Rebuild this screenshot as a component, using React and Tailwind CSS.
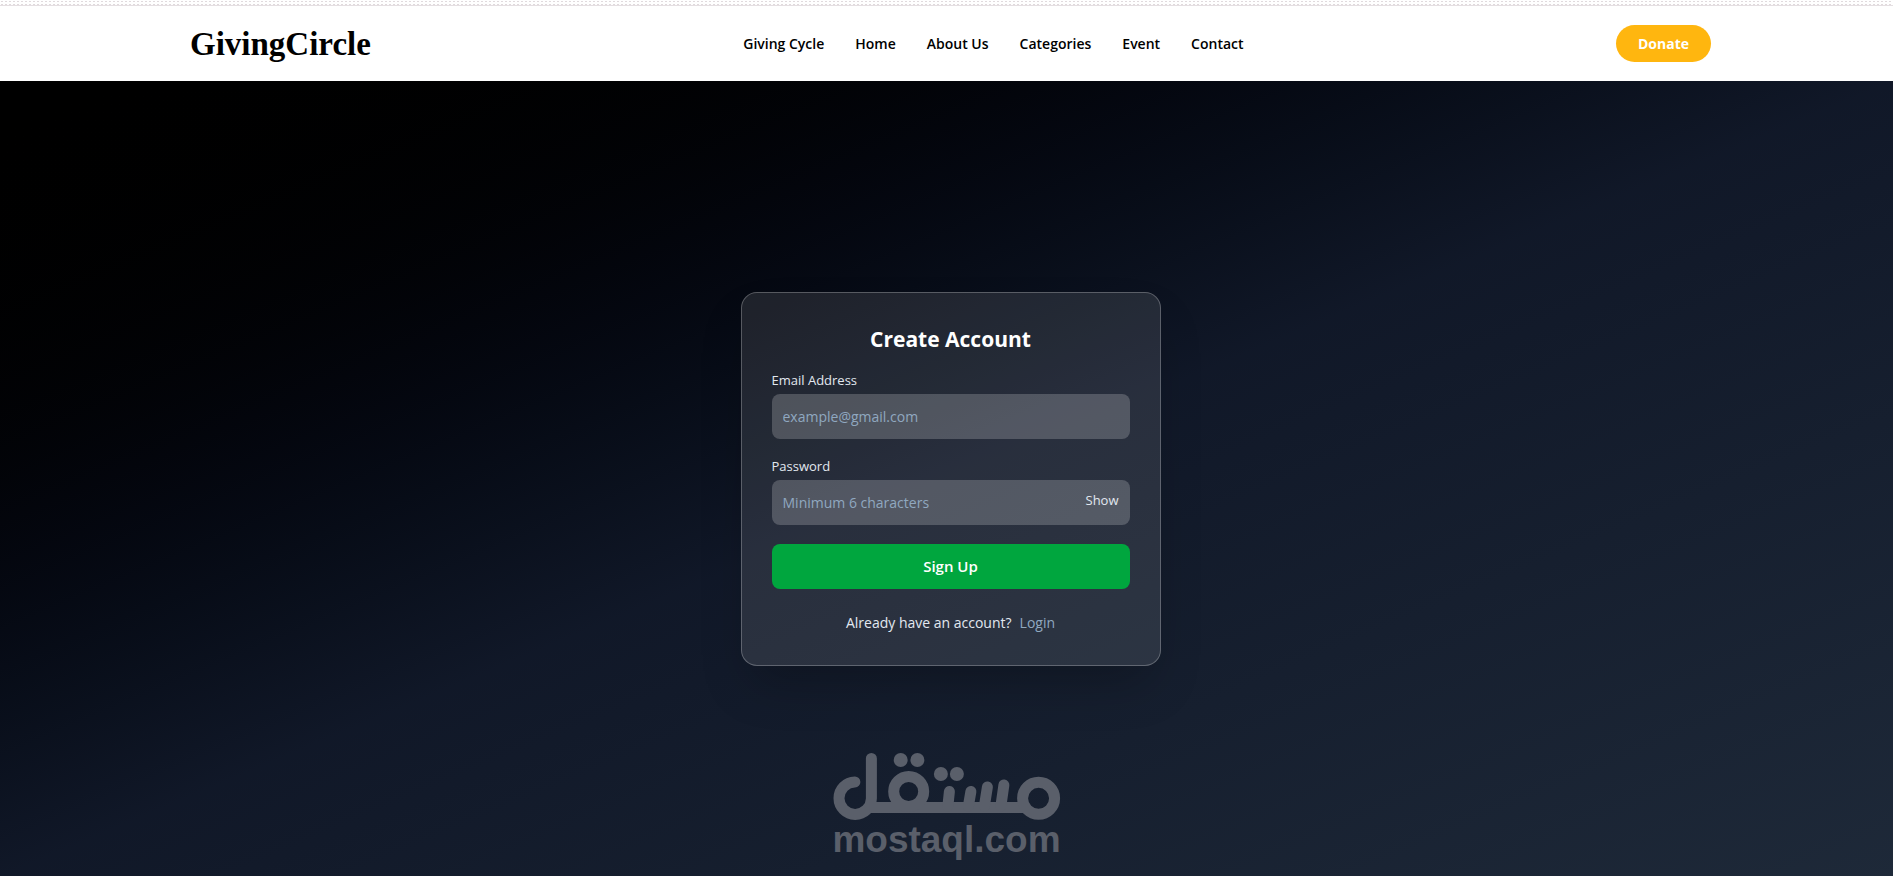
import { useState } from 'react';

const navLinks = ['Giving Cycle', 'Home', 'About Us', 'Categories', 'Event', 'Contact'];

const Navbar = () => {
    return (
        <header className="bg-white pl-2">
            <div className="h-[6px] -ml-2 border-b border-[#e5dfe2]">
                <div className="h-[5px] bg-[radial-gradient(#e0dadd_1px,transparent_1px)] bg-[length:4px_3px]" />
            </div>
            <div className="flex items-center justify-between px-[182px] h-[75px]">
                <a href="#" className="font-['Liberation_Serif',serif] font-bold text-[33px] leading-10 text-black">
                    GivingCircle
                </a>
                <nav className="flex items-center gap-[31px]">
                    {navLinks.map((link) => (
                        <a key={link} href="#" className="text-sm leading-6 font-semibold text-black whitespace-nowrap">
                            {link}
                        </a>
                    ))}
                </nav>
                <button type="button" className="rounded-full bg-[#ffb60f] px-[22px] h-[37px] text-sm font-bold text-white">
                    Donate
                </button>
            </div>
        </header>
    );
};

const SignupCard = () => {
    const [showPassword, setShowPassword] = useState(false);

    return (
        <form
            onSubmit={(e) => e.preventDefault()}
            className="w-full max-w-[420px] rounded-2xl border border-white/25 bg-white/10 p-[30px] shadow-2xl"
        >
            <h1 className="text-center text-[21px] leading-8 font-bold text-white">Create Account</h1>

            <div className="mt-[15px]">
                <label htmlFor="email" className="block text-[13px] leading-5 text-slate-200">Email Address</label>
                <input
                    id="email"
                    type="email"
                    placeholder="example@gmail.com"
                    className="mt-1 block w-full h-[45px] rounded-lg bg-white/20 px-[11px] text-sm text-white placeholder:text-[#90a8c0] outline-none"
                />
            </div>

            <div className="mt-[17px]">
                <label htmlFor="password" className="block text-[13px] leading-5 text-slate-200">Password</label>
                <div className="relative mt-1">
                    <input
                        id="password"
                        type={showPassword ? 'text' : 'password'}
                        placeholder="Minimum 6 characters"
                        className="block w-full h-[45px] rounded-lg bg-white/20 px-[11px] text-sm text-white placeholder:text-[#90a8c0] outline-none"
                    />
                    <button
                        type="button"
                        onClick={() => setShowPassword(!showPassword)}
                        className="absolute right-[11px] top-[10px] text-[13px] leading-5 text-slate-200"
                    >
                        {showPassword ? 'Hide' : 'Show'}
                    </button>
                </div>
            </div>

            <button type="submit" className="mt-[19px] w-full h-[45px] rounded-lg bg-[#00a63e] text-[15px] font-semibold text-white">
                Sign Up
            </button>

            <p className="mt-[22px] text-center text-sm leading-6 text-slate-200">
                Already have an account?
                <a href="#" className="ml-2 text-[#90a8c0]">Login</a>
            </p>
        </form>
    );
};

const Watermark = () => {
    return (
        <div className="pointer-events-none absolute bottom-4 left-1/2 -translate-x-1/2 flex flex-col items-center text-[#5a5f6a]">
            <svg width="228" height="68" viewBox="0 0 228 68" fill="none" stroke="currentColor" strokeWidth="11" strokeLinecap="round">
                <path d="M22 30A16.2 16.2 0 1 0 38.5 46.5V6.5" />
                <path d="M37 55.5H194" strokeLinecap="butt" />
                <circle cx="75.8" cy="39.5" r="15" />
                <circle cx="205.7" cy="46.3" r="16" />
                <path d="M116.5 39.5L115 54M138 39.5L135.500 54M154.5 35L151.5 54M171 33L168 54" />
                <g fill="currentColor" stroke="none">
                    <circle cx="67.8" cy="8" r="7" />
                    <circle cx="84.5" cy="8" r="7" />
                    <circle cx="108" cy="22" r="7" />
                    <circle cx="124" cy="22" r="7" />
                </g>
            </svg>
            <span className="font-['Liberation_Sans',sans-serif] font-bold text-[37px] leading-10">mostaql.com</span>
        </div>
    );
};

const App = () => {
    return (
        <div className="relative flex min-h-screen flex-col overflow-hidden font-['Open_Sans','Noto_Sans',sans-serif]">
            <Navbar />
            <main className="flex flex-1 items-center justify-center bg-linear-to-br from-black via-gray-900 to-gray-800 pl-2">
                <SignupCard />
            </main>
            <Watermark />
        </div>
    );
};

export default App;
